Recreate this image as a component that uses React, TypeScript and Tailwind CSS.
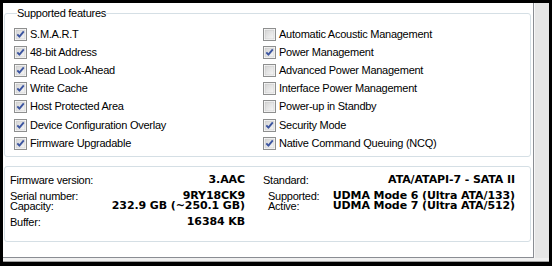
import type { ReactNode } from 'react'

const LEFT_FEATURES: [string, boolean][] = [
  ['S.M.A.R.T', true],
  ['48-bit Address', true],
  ['Read Look-Ahead', true],
  ['Write Cache', true],
  ['Host Protected Area', true],
  ['Device Configuration Overlay', true],
  ['Firmware Upgradable', true],
]

const RIGHT_FEATURES: [string, boolean][] = [
  ['Automatic Acoustic Management', false],
  ['Power Management', true],
  ['Advanced Power Management', false],
  ['Interface Power Management', false],
  ['Power-up in Standby', false],
  ['Security Mode', true],
  ['Native Command Queuing (NCQ)', true],
]

const regular = "font-['Liberation_Sans',Arial,sans-serif] text-[11px] tracking-[-0.25px] text-black"
const bold = "font-['DejaVu_Sans',Tahoma,sans-serif] text-[11px] font-bold tracking-[-0.1px] text-black"

// Win7-ish checkbox, drawn since the native one looks nothing like it
function CheckBox({ checked }: { checked: boolean }) {
  return (
    <svg width="13" height="13" viewBox="0 0 13 13" className="shrink-0">
      <defs>
        <linearGradient id="cbfill" x1="0" y1="0" x2="1" y2="1">
          <stop offset="0" stopColor="#d4d4d4" />
          <stop offset="1" stopColor="#f7f7f7" />
        </linearGradient>
      </defs>
      <rect x="0.5" y="0.5" width="12" height="12" fill="#fff" stroke="#8e8f8f" />
      <rect x="2" y="2" width="9" height="9" fill="url(#cbfill)" stroke="#c6c6c6" strokeWidth="0.6" />
      {checked && (
        <path d="M3.3 6.4 L5.4 8.7 L9.8 3.4" fill="none" stroke="#3c55a0" strokeWidth="1.9" strokeLinejoin="round" />
      )}
    </svg>
  )
}

function FeatureRow({ label, checked }: { label: string; checked: boolean }) {
  return (
    <div className="flex h-[18.2px] items-center gap-[3px]">
      <CheckBox checked={checked} />
      <span className={`${regular} leading-[13px] whitespace-nowrap`}>{label}</span>
    </div>
  )
}

function InfoRow({ label, value, indent, className }: { label: string; value: ReactNode; indent?: boolean; className?: string }) {
  return (
    <div className={`flex h-[16px] items-center justify-between whitespace-nowrap ${className ?? ''}`}>
      <span className={`${regular} leading-[10px] ${indent ? 'pl-[5px]' : ''}`}>{label}</span>
      <span className={`${bold} leading-[10px]`}>{value}</span>
    </div>
  )
}

export default function App() {
  return (
    <div className="h-[266px] w-[552px] bg-black pt-[3px] pr-[3px] pb-[4px] pl-[3px]">
      <div className="flex h-full flex-col bg-[#eaeaea]">
        <div className="flex flex-1">
          {/* tab page */}
          <div className="flex flex-1 flex-col border-r border-b border-[#8a8d93] bg-white pl-[1px] pr-[2px]">
            <fieldset className="mt-[3px] rounded-[3px] border border-[#d5dfe5] pl-[9px] pb-[4px]">
              <legend className={`${regular} ml-[3px] px-0 leading-[14px]`}>Supported features</legend>
              <div className="mt-[5px] grid grid-cols-[249px_1fr]">
                <div className="flex flex-col">
                  {LEFT_FEATURES.map(([l, c]) => (
                    <FeatureRow key={l} label={l} checked={c} />
                  ))}
                </div>
                <div className="flex flex-col">
                  {RIGHT_FEATURES.map(([l, c]) => (
                    <FeatureRow key={l} label={l} checked={c} />
                  ))}
                </div>
              </div>
            </fieldset>

            <div className="mt-[9px] flex h-[76px] rounded-[3px] border border-[#d5dfe5] pt-[5px] pl-[5px]">
              <div className="flex w-[235px] flex-col">
                <InfoRow label="Firmware version:" value="3.AAC" />
                <InfoRow label="Serial number:" value="9RY18CK9" />
                <InfoRow label="Capacity:" value="232.9 GB (~250.1 GB)" className="-mt-[6px]" />
                <InfoRow label="Buffer:" value="16384 KB" />
              </div>
              <div className="ml-[18px] flex w-[252px] flex-col">
                <InfoRow label="Standard:" value="ATA/ATAPI-7 - SATA II" />
                <InfoRow indent label="Supported:" value="UDMA Mode 6 (Ultra ATA/133)" />
                <InfoRow indent label="Active:" value="UDMA Mode 7 (Ultra ATA/512)" className="-mt-[6px]" />
              </div>
            </div>
          </div>
          {/* scroll gutter on the right */}
          <div className="w-[15px] border-l border-[#f7f7f7] bg-[#e6e6e6]" />
        </div>
        <div className="h-[4px] border-b border-[#a0a0a0] bg-[#f0f0f0]" />
      </div>
    </div>
  )
}
